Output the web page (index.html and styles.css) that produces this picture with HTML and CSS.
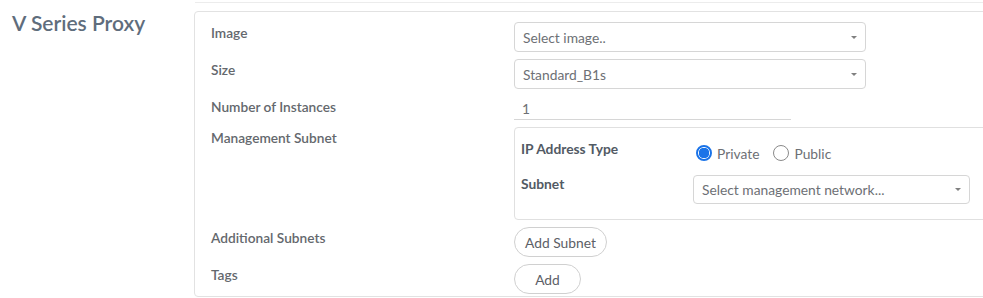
FILE: index.html
```html
<!DOCTYPE html>
<html>
<head>
<meta charset="utf-8">
<link rel="stylesheet" href="styles.css">
</head>
<body>
<div class="topline"></div>
<div class="page">
  <div class="side">
    <h2 class="title">V Series Proxy</h2>
  </div>
  <div class="card">
    <div class="form">
      <div class="label">Image</div>
      <div class="field"><div class="select wide"><span>Select image..</span><span class="caret"></span></div></div>

      <div class="label">Size</div>
      <div class="field"><div class="select wide"><span>Standard_B1s</span><span class="caret"></span></div></div>

      <div class="label">Number of Instances</div>
      <div class="field"><div class="input">1</div></div>

      <div class="label">Management Subnet</div>
      <div class="field">
        <div class="subbox">
          <div class="sublabel">IP Address Type</div>
          <div class="radios">
            <label class="radio"><span class="dot on"></span>Private</label>
            <label class="radio"><span class="dot"></span>Public</label>
          </div>
          <div class="sublabel">Subnet</div>
          <div><div class="select narrow"><span>Select management network...</span><span class="caret"></span></div></div>
        </div>
      </div>

      <div class="label">Additional Subnets</div>
      <div class="field"><button class="btn b-subnet">Add Subnet</button></div>

      <div class="label">Tags</div>
      <div class="field"><button class="btn b-add">Add</button></div>
    </div>
  </div>
</div>
</body>
</html>
```
FILE: styles.css
```css
* { box-sizing: border-box; }
html, body { margin: 0; padding: 0; background: #fff; }
body {
  font-family: "Lato", "Open Sans", sans-serif;
  color: #5c6066;
  width: 983px;
  height: 298px;
  overflow: hidden;
}
.topline {
  height: 3px;
  margin-left: 195px;
  border-bottom: 1px solid #ececec;
}
.page {
  display: flex;
  align-items: flex-start;
}
.side {
  width: 194px;
  flex: none;
  padding-left: 12px;
}
.title {
  margin: 7px 0 0 0;
  font-size: 21px;
  font-weight: 600;
  color: #5f6d7c;
  line-height: 26px;
}
.card {
  margin-top: 8px;
  width: 820px;
  flex: none;
  border: 1px solid #e2e2e2;
  border-radius: 4px;
  padding: 10px 0 2px 16px;
}
.form {
  display: grid;
  grid-template-columns: 303px 1fr;
  row-gap: 7px;
}
.label {
  font-size: 13.7px;
  font-weight: 600;
  color: #64686d;
  line-height: 16px;
  padding-top: 3px;
}
.field { display: flex; }
.select {
  height: 30px;
  border: 1px solid #d6d6d6;
  border-radius: 4px;
  display: flex;
  align-items: center;
  justify-content: space-between;
  padding: 0 8px 0 8px;
  font-size: 13.8px;
  color: #6d7075;
}
.select.wide { width: 352px; }
.select.narrow { width: 277px; height: 29px; }
.caret {
  width: 0; height: 0;
  border-left: 3px solid transparent;
  border-right: 3px solid transparent;
  border-top: 3px solid #808080;
}
.input {
  width: 277px;
  height: 24px;
  border-bottom: 1px solid #d6d6d6;
  padding: 4px 0 0 8px;
  font-size: 13.8px;
  color: #6d7075;
}
.subbox {
  width: 480px;
  height: 93px;
  border: 1px solid #e0e0e0;
  border-radius: 4px;
  padding: 12px 0 0 6px;
  display: grid;
  grid-template-columns: 172px 1fr;
  grid-template-rows: 24px 29px;
  row-gap: 11px;
}
.sublabel {
  font-size: 13.8px;
  font-weight: 700;
  color: #525a64;
  line-height: 16px;
  padding-top: 1px;
}
.radios {
  display: flex;
  align-items: center;
  gap: 14px;
  padding-top: 2px;
  padding-left: 3px;
}
.radio {
  display: flex;
  align-items: center;
  gap: 5px;
  font-size: 13.8px;
  color: #6d7075;
}
.dot {
  width: 16px; height: 16px;
  border-radius: 50%;
  border: 1px solid #8a8a8a;
  background: #fff;
  display: inline-block;
}
.dot.on {
  border: 2px solid #1a73e8;
  background: radial-gradient(circle, #1a73e8 0 5px, #fff 5.5px);
}
.btn {
  font-family: inherit;
  font-size: 13.8px;
  color: #5c6066;
  background: #fff;
  border: 1px solid #d0d0d0;
  border-radius: 15px;
  height: 30px;
  padding: 0;
}
.b-subnet { width: 93px; }
.b-add { width: 67px; }
```
